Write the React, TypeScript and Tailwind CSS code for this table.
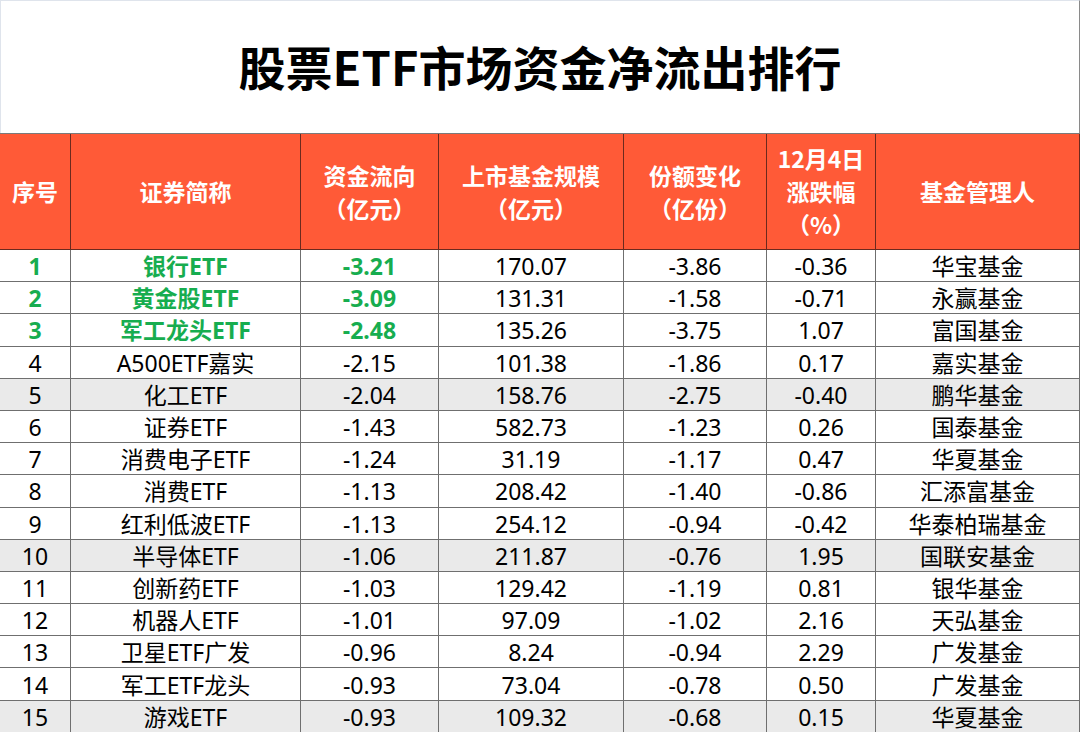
import React from "react";

type Row = {
  no: number;
  name: string;
  flow: string;
  size: string;
  share: string;
  pct: string;
  mgr: string;
};

const rows: Row[] = [
  { no: 1, name: "银行ETF", flow: "-3.21", size: "170.07", share: "-3.86", pct: "-0.36", mgr: "华宝基金" },
  { no: 2, name: "黄金股ETF", flow: "-3.09", size: "131.31", share: "-1.58", pct: "-0.71", mgr: "永赢基金" },
  { no: 3, name: "军工龙头ETF", flow: "-2.48", size: "135.26", share: "-3.75", pct: "1.07", mgr: "富国基金" },
  { no: 4, name: "A500ETF嘉实", flow: "-2.15", size: "101.38", share: "-1.86", pct: "0.17", mgr: "嘉实基金" },
  { no: 5, name: "化工ETF", flow: "-2.04", size: "158.76", share: "-2.75", pct: "-0.40", mgr: "鹏华基金" },
  { no: 6, name: "证券ETF", flow: "-1.43", size: "582.73", share: "-1.23", pct: "0.26", mgr: "国泰基金" },
  { no: 7, name: "消费电子ETF", flow: "-1.24", size: "31.19", share: "-1.17", pct: "0.47", mgr: "华夏基金" },
  { no: 8, name: "消费ETF", flow: "-1.13", size: "208.42", share: "-1.40", pct: "-0.86", mgr: "汇添富基金" },
  { no: 9, name: "红利低波ETF", flow: "-1.13", size: "254.12", share: "-0.94", pct: "-0.42", mgr: "华泰柏瑞基金" },
  { no: 10, name: "半导体ETF", flow: "-1.06", size: "211.87", share: "-0.76", pct: "1.95", mgr: "国联安基金" },
  { no: 11, name: "创新药ETF", flow: "-1.03", size: "129.42", share: "-1.19", pct: "0.81", mgr: "银华基金" },
  { no: 12, name: "机器人ETF", flow: "-1.01", size: "97.09", share: "-1.02", pct: "2.16", mgr: "天弘基金" },
  { no: 13, name: "卫星ETF广发", flow: "-0.96", size: "8.24", share: "-0.94", pct: "2.29", mgr: "广发基金" },
  { no: 14, name: "军工ETF龙头", flow: "-0.93", size: "73.04", share: "-0.78", pct: "0.50", mgr: "广发基金" },
  { no: 15, name: "游戏ETF", flow: "-0.93", size: "109.32", share: "-0.68", pct: "0.15", mgr: "华夏基金" },
];

const headers: string[][] = [
  ["序号"],
  ["证券简称"],
  ["资金流向", "（亿元）"],
  ["上市基金规模", "（亿元）"],
  ["份额变化", "（亿份）"],
  ["12月4日", "涨跌幅", "（%）"],
  ["基金管理人"],
];

export default function App() {
  return (
    <div className="w-[1080px] h-[732px] overflow-hidden bg-white font-['Noto_Sans','Noto_Sans_CJK_SC',sans-serif] text-black">
      {/* title */}
      <div className="h-[133px] flex items-center justify-center border-t border-l border-[#dfe4ec] border-r border-r-[#8a8a8a]">
        <h1 className="text-[47px] font-bold leading-none pb-1 font-['Noto_Sans_CJK_SC',sans-serif]">
          股票ETF市场资金净流出排行
        </h1>
      </div>

      {/* table */}
      <div className="grid grid-cols-[71px_230px_138px_185px_143px_109px_204px] border-t border-[#7a7a7a]">
        {headers.map((lines, i) => (
          <div
            key={i}
            className="h-[116px] bg-[#ff5a37] border-r border-b border-[#6b2a1e] flex flex-col items-center justify-center text-white font-bold text-[23px] leading-[33px] font-['Noto_Sans_CJK_SC',sans-serif]"
          >
            {lines.map((l) => (
              <span key={l}>{l}</span>
            ))}
          </div>
        ))}

        {rows.map((r) => {
          const gray = r.no % 5 === 0;
          const top = r.no <= 3;
          const base =
            "h-[32.2px] pt-[2px] border-r border-b border-[#6f6f6f] flex items-center justify-center text-[23px] leading-none " +
            (gray ? "bg-[#eaeaea]" : "bg-white");
          const hi = top ? " text-[#17ad4f] font-bold" : "";
          return (
            <React.Fragment key={r.no}>
              <div className={base + hi}>{r.no}</div>
              <div className={base + hi}>{r.name}</div>
              <div className={base + hi}>{r.flow}</div>
              <div className={base}>{r.size}</div>
              <div className={base}>{r.share}</div>
              <div className={base}>{r.pct}</div>
              <div className={base}>{r.mgr}</div>
            </React.Fragment>
          );
        })}
      </div>
    </div>
  );
}
